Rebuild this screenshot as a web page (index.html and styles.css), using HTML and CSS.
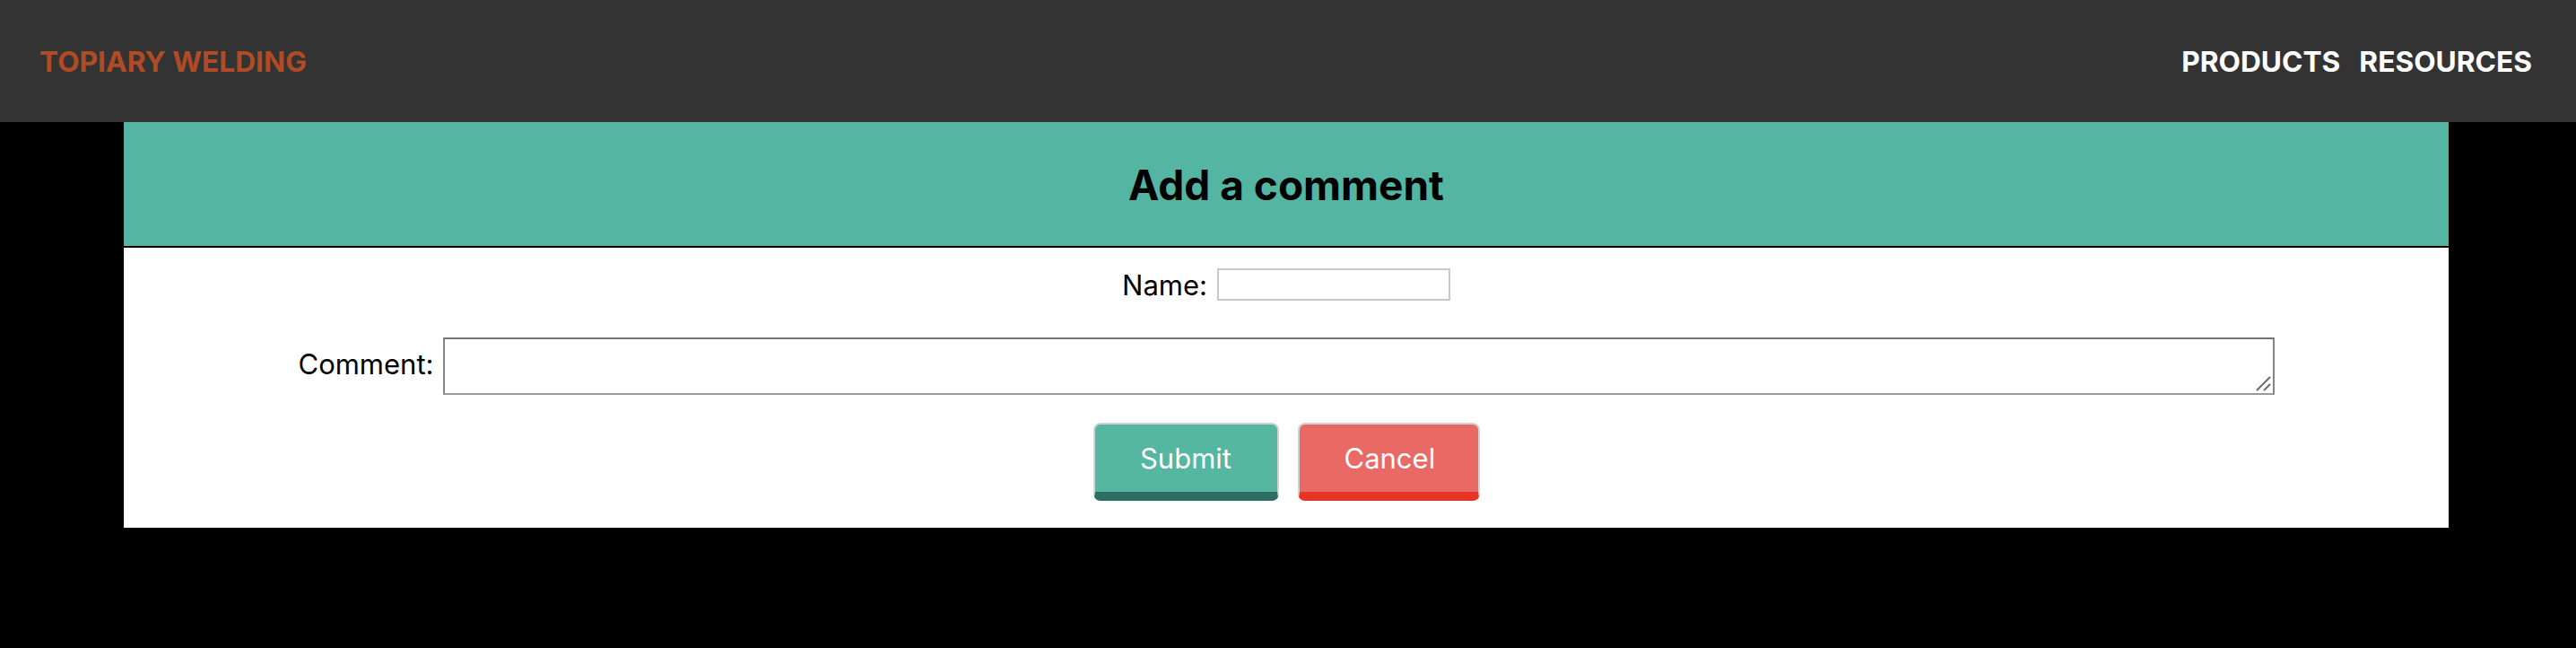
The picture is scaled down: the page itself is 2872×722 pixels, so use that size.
FILE: index.html
```html
<!DOCTYPE html>
<html lang="en">
<head>
<meta charset="utf-8">
<title>Topiary Welding - Add a comment</title>
<link rel="stylesheet" href="styles.css">
</head>
<body>
<header class="site-header">
  <a class="brand" href="#">TOPIARY WELDING</a>
  <nav class="nav">
    <a class="nav-link" href="#">PRODUCTS</a>
    <a class="nav-link" href="#">RESOURCES</a>
  </nav>
</header>
<main class="card">
  <div class="card-head">
    <h2 class="card-title">Add a comment</h2>
  </div>
  <form class="form">
    <div class="row row-name">
      <label class="label" for="name">Name:</label>
      <input class="name-input" id="name" type="text">
    </div>
    <div class="row row-comment">
      <label class="label label-comment" for="comment">Comment:</label>
      <div class="ta-wrap">
        <textarea class="comment-input" id="comment"></textarea>
        <svg class="grip" width="18" height="18" viewBox="0 0 18 18" aria-hidden="true">
          <line x1="1" y1="16" x2="16" y2="1" stroke="#6b6b6b" stroke-width="2"/>
          <line x1="9" y1="16" x2="16" y2="9" stroke="#6b6b6b" stroke-width="2"/>
        </svg>
      </div>
    </div>
    <div class="row row-buttons">
      <button class="btn btn-submit" type="button">Submit</button>
      <button class="btn btn-cancel" type="button">Cancel</button>
    </div>
  </form>
</main>
</body>
</html>
```

FILE: styles.css
```css
* { box-sizing: border-box; }

html, body {
  margin: 0;
  padding: 0;
  background: #000;
  font-family: Inter, "Liberation Sans", sans-serif;
  font-size: 32px;
}

.site-header {
  height: 136px;
  background: #333333;
  display: flex;
  align-items: center;
  justify-content: space-between;
  padding: 0 49px 0 44px;
}

.brand {
  color: #b04b25;
  font-weight: 700;
  font-size: 31.7px;
  text-decoration: none;
}

.nav {
  display: flex;
  gap: 21px;
}

.nav-link {
  color: #ffffff;
  font-weight: 700;
  font-size: 31.7px;
  text-decoration: none;
}

.card {
  display: block;
  margin-left: 138px;
  width: 2592px;
  background: #ffffff;
}

.card-head {
  height: 140px;
  background: #54b5a2;
  border-bottom: 2px solid #000;
  display: flex;
  align-items: center;
  justify-content: center;
}

.card-title {
  margin: 0;
  font-size: 46px;
  font-weight: 700;
  color: #000;
  line-height: 1;
  padding-top: 2px;
}

.form {
  display: flex;
  flex-direction: column;
  align-items: center;
  padding: 23px 0 30px;
}

.row {
  display: flex;
  align-items: center;
  justify-content: center;
}

.label {
  color: #000;
  font-size: 31px;
  line-height: 1;
}

.row-name {
  height: 36px;
  gap: 11px;
  margin-bottom: 41px;
}

.name-input {
  width: 260px;
  height: 36px;
  border: 2px solid #c8c8c8;
  background: #fff;
  padding: 0 4px;
  font: inherit;
  outline: none;
}

.row-comment {
  gap: 10px;
  margin-bottom: 31px;
}

.label-comment {
  margin-bottom: 6px;
}

.ta-wrap {
  position: relative;
  width: 2042px;
  height: 64px;
}

.comment-input {
  display: block;
  width: 100%;
  height: 100%;
  border: 2px solid #858585;
  border-top-color: #737373;
  border-bottom-color: #9a9a9a;
  padding: 4px;
  resize: none;
  font: inherit;
  outline: none;
  background: #fff;
}

.grip {
  position: absolute;
  right: 3px;
  bottom: 3px;
}

.row-buttons {
  gap: 21px;
}

.btn {
  height: 87px;
  padding: 0 50px;
  border: 2px solid #d2d2d2;
  border-bottom-width: 10px;
  border-radius: 8px;
  color: #ffffff;
  font-family: Inter, "Liberation Sans", sans-serif;
  font-size: 31px;
  font-weight: 400;
  cursor: pointer;
  line-height: 1;
}

.btn-submit {
  width: 207px;
  background: #55b6a2;
  border-bottom-color: #2e6e62;
}

.btn-cancel {
  width: 203px;
  background: #e96a65;
  border-bottom-color: #e63525;
}
```
